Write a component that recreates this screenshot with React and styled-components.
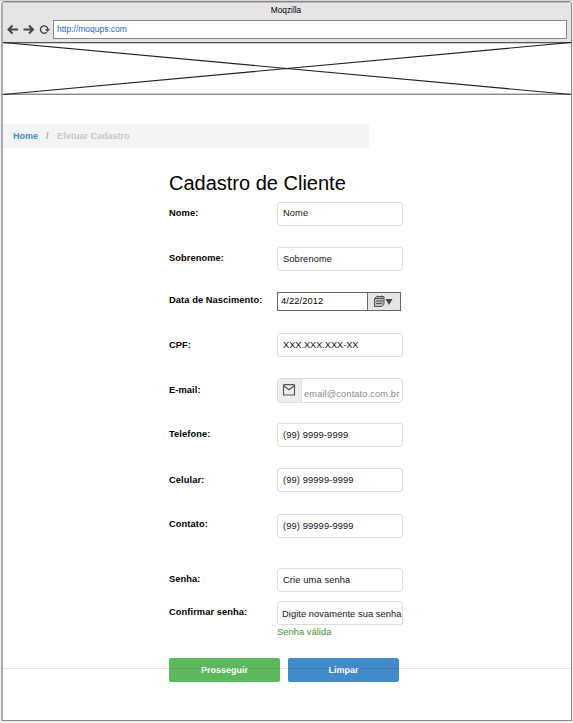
import React from "react";
import styled, { createGlobalStyle } from "styled-components";

const Global = createGlobalStyle`
  * { box-sizing: border-box; }
  body {
    margin: 0;
    background: #f0f0f0;
    font-family: "Liberation Sans", Arial, sans-serif;
    font-size: 9.3px;
    color: #000;
  }
`;

const Desktop = styled.div`
  height: 723px;
  padding: 1px 1px 2px;
  border-top: 1px solid #d4d4d4;
  overflow: hidden;
`;

const BrowserWindow = styled.div`
  position: relative;
  height: 720px;
  background: #fff;
  border: 1px solid #868686;
  border-left: 2px solid #aaa;
  border-radius: 4px 4px 0 0;
  margin-top: -1px;
  overflow: hidden;
`;

const Chrome = styled.header`
  height: 40px;
  background: #e5e5e5;
  border-top: 1px solid #bbb;
`;

const WindowTitle = styled.div`
  height: 17px;
  line-height: 15px;
  padding-right: 2px;
  font-size: 8.3px;
  text-align: center;
`;

const Toolbar = styled.div`
  display: flex;
  align-items: center;
  padding: 0 4px;
  height: 19px;
`;

const NavIcons = styled.svg`
  width: 46px;
  height: 19px;
  flex: none;
`;

const AddressBar = styled.div`
  flex: 1;
  height: 19px;
  line-height: 17px;
  padding-left: 3px;
  background: #fff;
  border: 1px solid #888;
  color: #1565d8;
  font-size: 8.5px;
`;

const Banner = styled.svg`
  display: block;
  width: 100%;
  height: 54px;
`;

const Breadcrumb = styled.nav`
  display: flex;
  width: 366px;
  height: 24px;
  margin-top: 28px;
  padding-left: 10px;
  line-height: 24px;
  background: #f4f4f4;
  border-radius: 0 2px 2px 0;
  font-size: 9px;
  font-weight: bold;
`;

const Crumb = styled.span`
  color: ${(p) => (p.$active ? "#428bca" : "#c8c8c8")};
`;

const Separator = styled.span`
  width: 19px;
  padding-left: 8px;
  color: #aaa;
`;

const Form = styled.form`
  width: 240px;
  margin: 24px 0 0 166px;
`;

const Heading = styled.h1`
  margin: 0;
  height: 30px;
  line-height: 22px;
  font-size: 20px;
  font-weight: normal;
`;

const Row = styled.div`
  display: grid;
  grid-template-columns: 108px 126px;
  height: ${(p) => p.$height}px;
  align-items: start;
`;

const Label = styled.label`
  padding-top: ${(p) => p.$top}px;
  line-height: 12px;
  font-weight: bold;
  letter-spacing: 0.08px;
  white-space: nowrap;
`;

const Field = styled.div`
  height: 24px;
  padding-left: ${(p) => p.$indent ?? 5}px;
  line-height: ${(p) => p.$line ?? 22}px;
  letter-spacing: ${(p) => p.$tracking ?? 0.12}px;
  border: 1px solid #ddd;
  border-radius: 3px;
  white-space: nowrap;
  color: #111;
`;

const DateField = styled.div`
  display: flex;
  width: 124px;
  height: 19px;
  border: 1px solid #666;
  line-height: 17px;
  letter-spacing: 0.1px;
`;

const DateValue = styled.span`
  flex: 1;
  padding-left: 3px;
`;

const DateButton = styled.span`
  width: 33px;
  border-left: 1px solid #666;
  background: #e5e5e5;
`;

const EmailField = styled.div`
  display: flex;
  height: 25px;
  border: 1px solid #ddd;
  border-radius: 4px;
  overflow: hidden;
`;

const EmailAddon = styled.span`
  width: 24px;
  flex: none;
  background: #eee;
  border-right: 1px solid #ddd;
`;

const EmailValue = styled.span`
  padding: 9px 0 0 2px;
  line-height: 12px;
  letter-spacing: 0.11px;
  white-space: nowrap;
  color: #888;
`;

const Icon = styled.svg`
  display: block;
`;

const Message = styled.p`
  margin: 0 0 0 108px;
  height: 32px;
  line-height: 13px;
  letter-spacing: 0.05px;
  color: #4b9130;
`;

const Actions = styled.div`
  display: flex;
  gap: 8px;
`;

const Button = styled.button`
  width: 111px;
  height: 24px;
  padding: 0;
  border: 0;
  border-radius: 2px;
  background: ${(p) => (p.$primary ? "#5cb85c" : "#428bca")};
  color: #fff;
  font: bold 9px "Liberation Sans", Arial, sans-serif;
`;

const FoldLine = styled.div`
  position: absolute;
  left: 0;
  right: 0;
  top: 666px;
  height: 1px;
  background: rgba(0, 0, 0, 0.1);
`;

const before = [
  { label: "Nome:", value: "Nome", height: 45, top: 5, line: 21 },
  { label: "Sobrenome:", value: "Sobrenome", height: 45, top: 5 },
];

const after = [
  { label: "Telefone:", value: "(99) 9999-9999", height: 45, top: 5 },
  { label: "Celular:", value: "(99) 99999-9999", height: 46, top: 6 },
  { label: "Contato:", value: "(99) 99999-9999", height: 54, top: 4 },
  { label: "Senha:", value: "Crie uma senha", height: 33, top: 5 },
  { label: "Confirmar senha:", value: "Digite novamente sua senha", height: 25, top: 5, indent: 4, line: 24, tracking: 0.06 },
];

function FieldRow({ label, value, height, top, line, indent, tracking }) {
  return (
    <Row $height={height}>
      <Label $top={top}>{label}</Label>
      <Field $line={line} $indent={indent} $tracking={tracking}>{value}</Field>
    </Row>
  );
}

export default function App() {
  return (
    <>
      <Global />
      <Desktop>
        <BrowserWindow>
          <Chrome>
            <WindowTitle>Moqzilla</WindowTitle>
            <Toolbar>
              <NavIcons viewBox="0 0 46 19" fill="none" stroke="#444" strokeWidth="2">
                <path d="M11 9.5H2M5.5 5.5l-4 4 4 4M16.5 9.5h9M22 5.5l4 4-4 4" />
                <path d="M39.8 12.2a3.7 3.7 0 1 1 1-3.4" strokeWidth="1.4" />
                <path d="M38 9h5l-2.5 3z" fill="#444" stroke="none" />
              </NavIcons>
              <AddressBar>http://moqups.com</AddressBar>
            </Toolbar>
          </Chrome>
          <Banner viewBox="0 0 568 54" preserveAspectRatio="none">
            <path d="M0 .5h568" stroke="#555" />
            <path d="M0 1.5h568" stroke="#ccc" />
            <path d="M0 51.5h568" stroke="#ccc" />
            <path d="M0 52.5h568" stroke="#888" />
            <path d="M0 .5l568 52M0 52.5L568 .5" stroke="#222" strokeWidth="1.2" />
          </Banner>
          <Breadcrumb>
            <Crumb $active>Home</Crumb>
            <Separator>/</Separator>
            <Crumb>Efetuar Cadastro</Crumb>
          </Breadcrumb>
          <Form>
            <Heading>Cadastro de Cliente</Heading>
            {before.map((f) => <FieldRow key={f.label} {...f} />)}
            <Row $height={41}>
              <Label $top={2}>Data de Nascimento:</Label>
              <DateField>
                <DateValue>4/22/2012</DateValue>
                <DateButton>
                  <Icon width="32" height="17" viewBox="0 0 32 17">
                    <path d="M8.5 3.5H16v7.5l-2 2.5H6.5V5.5z" fill="#bbb" stroke="#555" />
                    <path d="M7 5.5h9M9.5 2.5v2M13.5 2.5v2M8 8h7M8 10.5h6" fill="none" stroke="#555" />
                    <path d="M17.5 6h7L21 12z" fill="#444" />
                  </Icon>
                </DateButton>
              </DateField>
            </Row>
            <FieldRow label="CPF:" value="XXX.XXX.XXX-XX" height={45} top={6} tracking={-0.07} />
            <Row $height={45}>
              <Label $top={6}>E-mail:</Label>
              <EmailField>
                <EmailAddon>
                  <Icon width="23" height="23" viewBox="0 0 23 23" fill="none" stroke="#555" strokeWidth="1.2">
                    <rect x="5.5" y="5.6" width="11" height="10.4" rx="0.6" />
                    <path d="M6 7l5 3.8L16 7" />
                  </Icon>
                </EmailAddon>
                <EmailValue>email@contato.com.br</EmailValue>
              </EmailField>
            </Row>
            {after.map((f) => <FieldRow key={f.label} {...f} />)}
            <Message>Senha válida</Message>
            <Actions>
              <Button type="button" $primary>Prosseguir</Button>
              <Button type="button">Limpar</Button>
            </Actions>
          </Form>
          <FoldLine />
        </BrowserWindow>
      </Desktop>
    </>
  );
}
